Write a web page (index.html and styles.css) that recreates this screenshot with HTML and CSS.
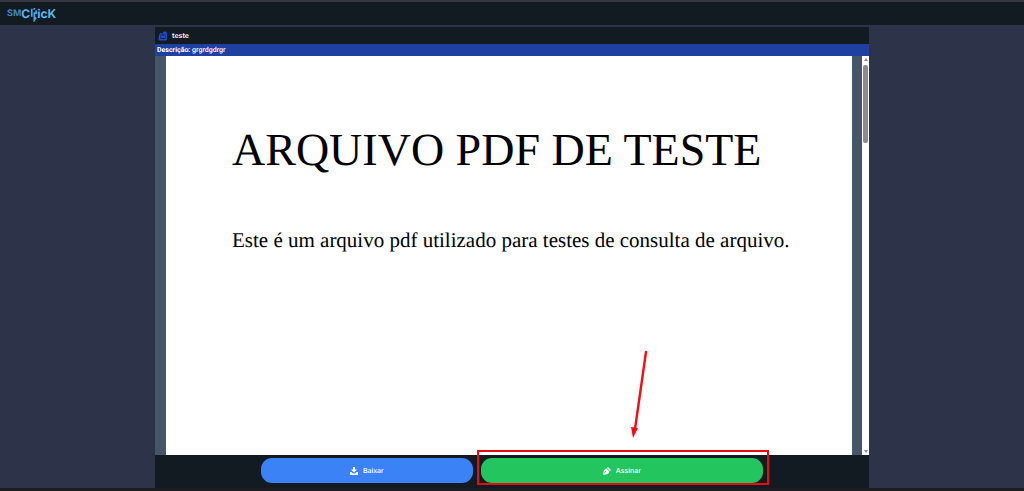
FILE: index.html
```html
<!DOCTYPE html>
<html lang="pt-BR">
<head>
    <meta charset="UTF-8">
    <meta name="viewport" content="width=device-width, initial-scale=1.0">
    <title>SMClick - teste</title>
    <link rel="stylesheet" href="styles.css">
</head>
<body>
    <header class="topbar">
        <div class="logo">
            <span class="logo-sm">SM</span><span class="logo-click">C</span><svg class="logo-mark" viewBox="0 0 8 16" aria-hidden="true">
                <path d="M2 2v9M5 6v9l2-3M5 1v2M7 4v4" />
            </svg><span class="logo-click">icK</span>
        </div>
    </header>

    <main class="document">
        <div class="document-title">
            <svg class="title-icon" viewBox="0 0 20 20" aria-hidden="true">
                <path d="M2 8l3-4 5 1 1-4h5l2 4v12l-2 2H3l-2-2z" fill="#1e4fd0" />
                <path d="M5 8h10M5 15h10M5 11v2M15 11v2" stroke="#0f1f4a" stroke-width="2" />
            </svg>
            <h1>teste</h1>
        </div>
        <p class="description"><strong>Descrição:</strong> grgrdgdrgr</p>

        <div class="viewer">
            <article class="page">
                <h2>ARQUIVO PDF DE TESTE</h2>
                <p>Este é um arquivo pdf utilizado para testes de consulta de arquivo.</p>
            </article>
            <div class="scrollbar">
                <span class="arrow-up"></span>
                <span class="thumb"></span>
                <span class="arrow-down"></span>
            </div>
        </div>

        <footer class="actions">
            <button type="button" class="btn btn-download">
                <svg viewBox="0 0 16 16" aria-hidden="true">
                    <path d="M6 0h4v5h4l-6 6-6-6h4z" />
                    <path d="M0 10h3l3 3h4l3-3h3v6H0z" />
                </svg>
                Baixar
            </button>
            <div class="sign">
                <button type="button" class="btn btn-sign">
                    <svg viewBox="0 0 16 16" aria-hidden="true">
                        <path d="M10 0l6 6-2 2-6-6zM7 3l6 6-3 5-10 2 5-6a1 1 0 1 0-1-1l-4 6 2-9z" />
                    </svg>
                    Assinar
                </button>
                <div class="highlight"></div>
                <svg class="pointer" viewBox="0 0 20 88" aria-hidden="true">
                    <path d="M16 2L5 79" stroke="#fa0a12" stroke-width="2.4" stroke-linecap="round" />
                    <path d="M1 77l7 1-5 10z" fill="#fa0a12" />
                </svg>
            </div>
        </footer>
    </main>
</body>
</html>
```
FILE: styles.css
```css
* {
    box-sizing: border-box;
}
body {
    display: flex;
    flex-direction: column;
    height: 100vh;
    margin: 0;
    background-color: #2d3348;
    border-bottom: 3px solid #1d1c20;
    font-family: Inter, Arial, sans-serif;
    text-rendering: geometricPrecision;
    color: white;
}
h1, h2, p {
    margin: 0;
}
.topbar {
    display: flex;
    align-items: center;
    height: 25px;
    padding: 0 7px;
    background-color: #111b21;
    border-top: 2px solid #3a3542;
}
.logo {
    display: flex;
    align-items: center;
    line-height: 16px;
    font-weight: 700;
    color: #5fb4e8;
}
.logo-sm {
    font-size: 9px;
    color: #3f86c4;
}
.logo-click {
    font-size: 12px;
}
.logo-mark {
    width: 7px;
    height: 16px;
    fill: none;
    stroke: #4fa5e4;
    stroke-width: 2;
}
.document {
    display: flex;
    flex: 1;
    flex-direction: column;
    min-height: 0;
    margin: 2px 155px 0;
}
.document-title {
    display: flex;
    align-items: center;
    gap: 4px;
    height: 17px;
    padding: 0 3px;
    background-color: #111b21;
}
.document-title h1 {
    font-size: 7px;
    font-weight: 600;
}
.title-icon {
    width: 10px;
    height: 10px;
}
.description {
    padding: 0 2px;
    background-color: #1e40a0;
    font-family: Roboto, Arial, sans-serif;
    font-size: 7px;
    font-weight: 500;
    line-height: 12px;
}
.description strong {
    font-weight: 700;
}
.viewer {
    display: flex;
    flex: 1;
    min-height: 0;
    background-color: #475569;
}
.page {
    flex: 1;
    margin: 0 10px 0 11px;
    padding: 67px 66px;
    overflow: hidden;
    background-color: white;
    color: black;
    font-family: "Liberation Serif", "Times New Roman", serif;
    white-space: nowrap;
}
.page h2 {
    margin-bottom: 51px;
    font-size: 46px;
    font-weight: 400;
    line-height: 54px;
}
.page p {
    font-size: 21px;
    line-height: 24px;
}
.scrollbar {
    display: flex;
    flex-direction: column;
    align-items: center;
    width: 7px;
    padding: 2px 1px;
    background-color: white;
}
.arrow-up, .arrow-down {
    border: 2px solid transparent;
}
.arrow-up {
    border-top: 0;
    border-bottom: 3px solid #8b8b8b;
}
.arrow-down {
    margin-top: auto;
    border-bottom: 0;
    border-top: 3px solid #8b8b8b;
}
.thumb {
    width: 5px;
    height: 78px;
    margin-top: 4px;
    border-radius: 2px;
    background-color: #8b8b8b;
}
.actions {
    display: grid;
    grid-template-columns: 3fr 4fr;
    gap: 8px;
    padding: 3px 106px 5px;
    background-color: #111b21;
}
.btn {
    display: flex;
    align-items: center;
    justify-content: center;
    gap: 5px;
    width: 100%;
    height: 25px;
    padding: 0;
    border: none;
    border-radius: 11px;
    color: white;
    font-family: inherit;
    font-size: 7px;
    font-weight: 500;
    text-rendering: inherit;
    cursor: pointer;
}
.btn svg {
    width: 8px;
    height: 8px;
    fill: white;
}
.btn-download {
    background-color: #3b82f6;
}
.btn-sign {
    background-color: #22c55e;
}
.sign {
    position: relative;
}
.highlight {
    position: absolute;
    inset: -8px -6px -2px -4px;
    border: 2px solid #e90a14;
    pointer-events: none;
}
.pointer {
    position: absolute;
    bottom: 45px;
    left: 149px;
    width: 20px;
    height: 88px;
    fill: none;
    pointer-events: none;
}
```
